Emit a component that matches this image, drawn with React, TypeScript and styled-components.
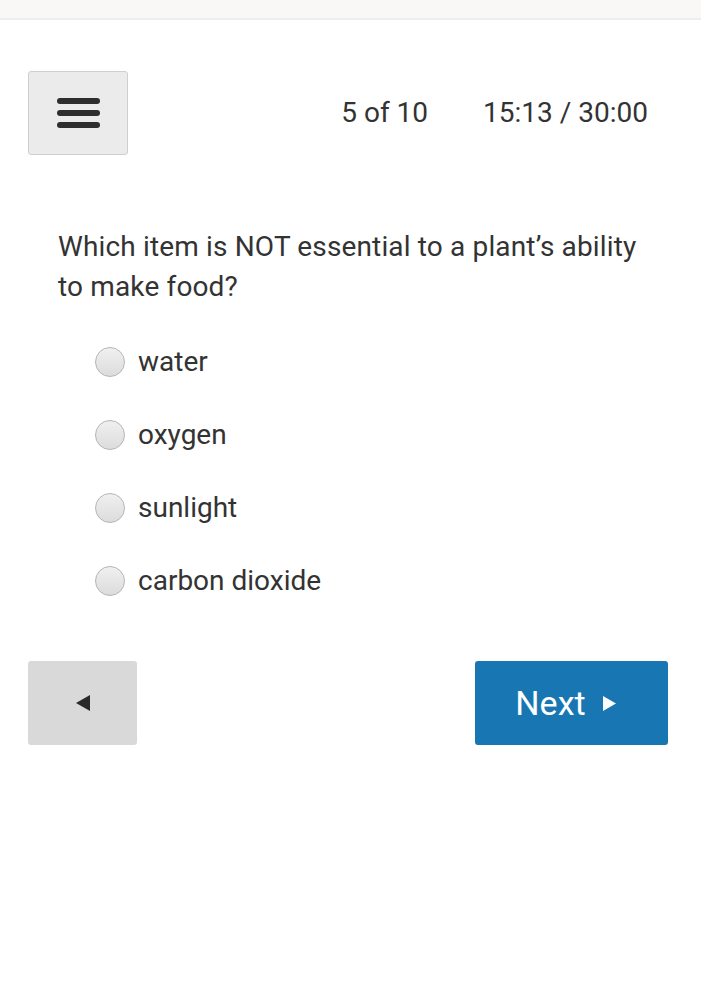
import React from "react";
import styled, { createGlobalStyle } from "styled-components";

const Global = createGlobalStyle`
  html, body { margin: 0; padding: 0; background: #fff; }
  body { font-family: Roboto, "Noto Sans", Arial, sans-serif; color: #333; }
  * { box-sizing: border-box; }
`;

const TopBar = styled.div`
  height: 20px;
  background: #f9f8f6;
  border-bottom: 2px solid #eeeeee;
`;

const Page = styled.div`
  padding: 51px 33px 0 28px;
`;

const Header = styled.div`
  display: flex;
  align-items: center;
  justify-content: space-between;
`;

const MenuButton = styled.button`
  width: 100px;
  height: 84px;
  background: #ebebeb;
  border: 1px solid #cfcfcf;
  border-radius: 3px;
  display: flex;
  flex-direction: column;
  align-items: center;
  justify-content: center;
  gap: 6px;
  padding: 0;
`;

const Bar = styled.span`
  display: block;
  width: 43px;
  height: 6px;
  border-radius: 3px;
  background: #2e2e2e;
`;

const Status = styled.div`
  display: flex;
  gap: 55px;
  font-size: 28px;
  color: #333;
  margin-right: 20px;
  margin-bottom: 2px;
`;

const Question = styled.div`
  margin: 72px 0 0 30px;
  font-size: 28px;
  letter-spacing: 0.15px;
  line-height: 40px;
  color: #333;
`;

const Options = styled.div`
  display: flex;
  flex-direction: column;
  gap: 43px;
  margin: 40px 0 0 67px;
`;

const Option = styled.label`
  display: flex;
  align-items: center;
  gap: 13px;
  font-size: 28px;
  line-height: 30px;
  color: #333;
`;

const Radio = styled.span`
  width: 30px;
  height: 30px;
  border-radius: 50%;
  border: 1px solid #b5b5b5;
  background: linear-gradient(#f0f0f0, #dcdcdc);
  flex: none;
`;

const Nav = styled.div`
  display: flex;
  justify-content: space-between;
  margin-top: 65px;
`;

const PrevButton = styled.button`
  width: 109px;
  height: 84px;
  border: none;
  border-radius: 3px;
  background: #d9d9d9;
  display: flex;
  align-items: center;
  justify-content: center;
  padding: 0;
`;

const NextButton = styled.button`
  width: 193px;
  height: 84px;
  border: none;
  border-radius: 3px;
  background: #1877b3;
  color: #fff;
  font-family: Roboto, Arial, sans-serif;
  font-size: 34px;
  display: flex;
  align-items: center;
  justify-content: center;
  gap: 17px;
  padding: 0 12px 0 0;
`;

const options = ["water", "oxygen", "sunlight", "carbon dioxide"];

export default function App() {
  return (
    <>
      <Global />
      <TopBar />
      <Page>
        <Header>
          <MenuButton aria-label="menu">
            <Bar />
            <Bar />
            <Bar />
          </MenuButton>
          <Status>
            <span>5 of 10</span>
            <span>15:13 / 30:00</span>
          </Status>
        </Header>
        <Question>Which item is NOT essential to a plant’s ability to make food?</Question>
        <Options>
          {options.map((o) => (
            <Option key={o}>
              <Radio />
              {o}
            </Option>
          ))}
        </Options>
        <Nav>
          <PrevButton aria-label="previous">
            <svg width="14" height="16" viewBox="0 0 14 16">
              <polygon points="14,0 14,16 0,8" fill="#2a2a2a" />
            </svg>
          </PrevButton>
          <NextButton>
            Next
            <svg width="13" height="15" viewBox="0 0 13 15">
              <polygon points="0,0 0,15 13,7.5" fill="#fff" />
            </svg>
          </NextButton>
        </Nav>
      </Page>
    </>
  );
}
